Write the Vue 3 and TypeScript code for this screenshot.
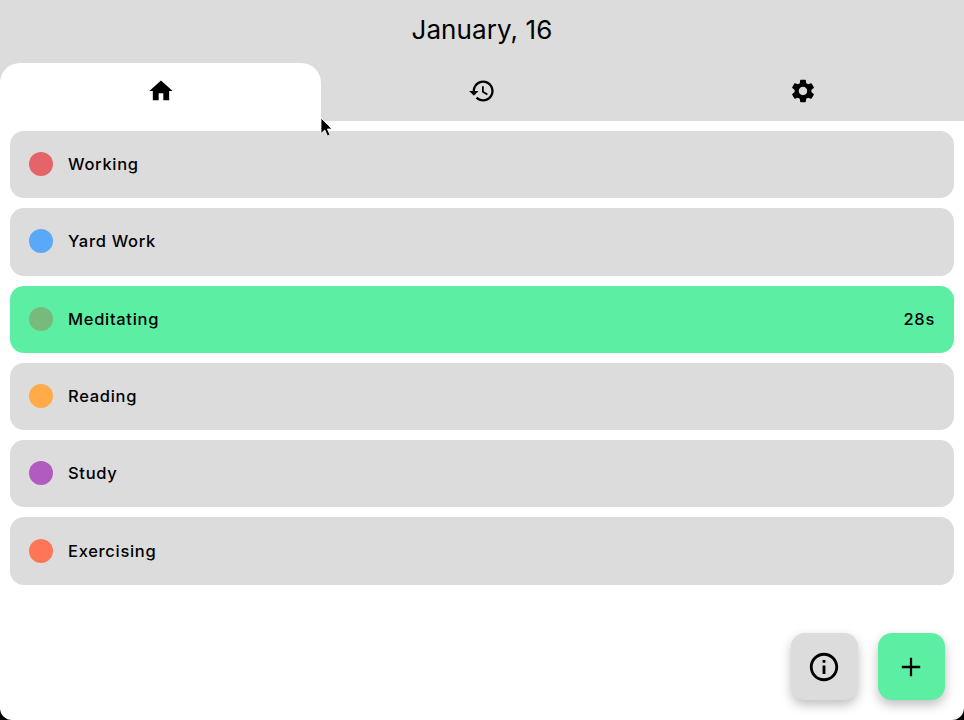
<script setup lang="ts">
type Activity = { name: string; color: string; time?: string; active?: boolean }

const activities: Activity[] = [
  { name: "Working", color: "#e46469" },
  { name: "Yard Work", color: "#59a9f8" },
  { name: "Meditating", color: "#78ba7c", time: "28s", active: true },
  { name: "Reading", color: "#ffab47" },
  { name: "Study", color: "#b15bc0" },
  { name: "Exercising", color: "#ff7656" },
]

const tabs = [
  {
    name: "home",
    d: "M10 20v-6h4v6h5v-8h3L12 3 2 12h3v8z",
  },
  {
    name: "history",
    d: "M13 3c-4.97 0-9 4.03-9 9H1l3.89 3.89.07.14L9 12H6c0-3.87 3.13-7 7-7s7 3.13 7 7-3.13 7-7 7c-1.93 0-3.68-.79-4.94-2.06l-1.42 1.42C8.27 19.99 10.51 21 13 21c4.97 0 9-4.03 9-9s-4.03-9-9-9zm-1 5v5l4.28 2.54.72-1.21-3.5-2.08V8H12z",
  },
  {
    name: "settings",
    d: "M19.14 12.94c.04-.3.06-.61.06-.94 0-.32-.02-.64-.07-.94l2.03-1.58c.18-.14.23-.41.12-.61l-1.92-3.32c-.12-.22-.37-.29-.59-.22l-2.39.96c-.5-.38-1.03-.7-1.62-.94l-.36-2.54c-.04-.24-.24-.41-.48-.41h-3.84c-.24 0-.43.17-.47.41l-.36 2.54c-.59.24-1.13.57-1.62.94l-2.39-.96c-.22-.08-.47 0-.59.22L2.74 8.87c-.12.21-.08.47.12.61l2.03 1.58c-.05.3-.09.63-.09.94s.02.64.07.94l-2.03 1.58c-.18.14-.23.41-.12.61l1.92 3.32c.12.22.37.29.59.22l2.39-.96c.5.38 1.03.7 1.62.94l.36 2.54c.05.24.24.41.48.41h3.84c.24 0 .44-.17.47-.41l.36-2.54c.59-.24 1.13-.56 1.62-.94l2.39.96c.22.08.47 0 .59-.22l1.92-3.32c.12-.22.07-.47-.12-.61l-2.01-1.58zM12 15.6c-1.98 0-3.6-1.62-3.6-3.6s1.62-3.6 3.6-3.6 3.6 1.62 3.6 3.6-1.62 3.6-3.6 3.6z",
  },
]
</script>

<template>
  <div class="page">
    <header class="top">
      <h1 class="title">January, 16</h1>
      <nav class="tabs">
        <div v-for="(tab, i) in tabs" :key="tab.name" class="tab" :class="{ selected: i === 0 }">
          <svg viewBox="0 0 24 24" width="28" height="28"><path :d="tab.d" /></svg>
        </div>
      </nav>
    </header>

    <main class="list">
      <div v-for="item in activities" :key="item.name" class="row" :class="{ active: item.active }">
        <span class="dot" :style="{ background: item.color }"></span>
        <span class="name">{{ item.name }}</span>
        <span v-if="item.time" class="time">{{ item.time }}</span>
      </div>
    </main>

    <footer class="actions">
      <button type="button" class="fab">
        <svg viewBox="0 0 24 24" width="34" height="34">
          <path d="M11 7h2v2h-2zm0 4h2v6h-2zm1-9C6.48 2 2 6.48 2 12s4.48 10 10 10 10-4.48 10-10S17.52 2 12 2zm0 18c-4.41 0-8-3.59-8-8s3.59-8 8-8 8 3.59 8 8-3.59 8-8 8z" />
        </svg>
      </button>
      <button type="button" class="fab green">
        <svg viewBox="0 0 24 24" width="34" height="34">
          <path d="M18.5 12.8h-5.7v5.7h-1.6v-5.7H5.5v-1.6h5.7V5.500h1.600v5.700h5.700v1.600z" />
        </svg>
      </button>
    </footer>

    <svg class="cursor" viewBox="0 0 14 22" width="14" height="22">
      <path d="M1 1v15.500l3.800-3.500 2.600 6 2.600-1.100-2.600-5.900H12z" fill="#000" stroke="#fff" stroke-width="0.8" />
    </svg>
  </div>
</template>

<style scoped>
.page {
  position: relative;
  height: 720px;
  display: flex;
  flex-direction: column;
  background: #fff;
  border-radius: 0 0 12px 12px;
  font-family: Inter, "Liberation Sans", sans-serif;
  color: #000;
  overflow: hidden;
}

.top {
  background: #dcdcdc;
  height: 121px;
  display: flex;
  flex-direction: column;
}

.title {
  margin: 0;
  height: 63px;
  padding-bottom: 4px;
  box-sizing: border-box;
  display: flex;
  align-items: center;
  justify-content: center;
  font-size: 26px;
  font-weight: 400;
  letter-spacing: 0.1px;
}

.tabs {
  flex: 1;
  display: grid;
  grid-template-columns: repeat(3, 1fr);
}

.tab {
  display: flex;
  align-items: center;
  justify-content: center;
  padding-bottom: 3px;
}

.tab.selected {
  background: #fff;
  border-radius: 20px 20px 0 0;
}

.list {
  flex: 1;
  padding: 10px;
  display: flex;
  flex-direction: column;
  gap: 10px;
}

.row {
  height: 67.3px;
  flex: none;
  box-sizing: border-box;
  padding: 0 19px 1px;
  display: flex;
  align-items: center;
  background: #dcdcdc;
  border-radius: 14px;
  font-size: 16.5px;
  font-weight: 500;
  letter-spacing: 0.7px;
}

.row.active {
  background: #5cefa3;
}

.dot {
  width: 24px;
  height: 24px;
  border-radius: 50%;
  margin-right: 15px;
}

.time {
  margin-left: auto;
}

.actions {
  display: flex;
  justify-content: flex-end;
  gap: 20px;
  padding: 0 19px 20px 0;
}

.fab {
  width: 67px;
  height: 67px;
  padding: 0 1px 0 0;
  border: 0;
  border-radius: 14px;
  background: #dcdcdc;
  display: flex;
  align-items: center;
  justify-content: center;
  box-shadow: 0 5px 11px rgba(0, 0, 0, 0.25);
}

.fab.green {
  background: #5cefa3;
}

.cursor {
  position: absolute;
  left: 320px;
  top: 117px;
}
</style>

<style>
body {
  background: #000;
}
</style>
